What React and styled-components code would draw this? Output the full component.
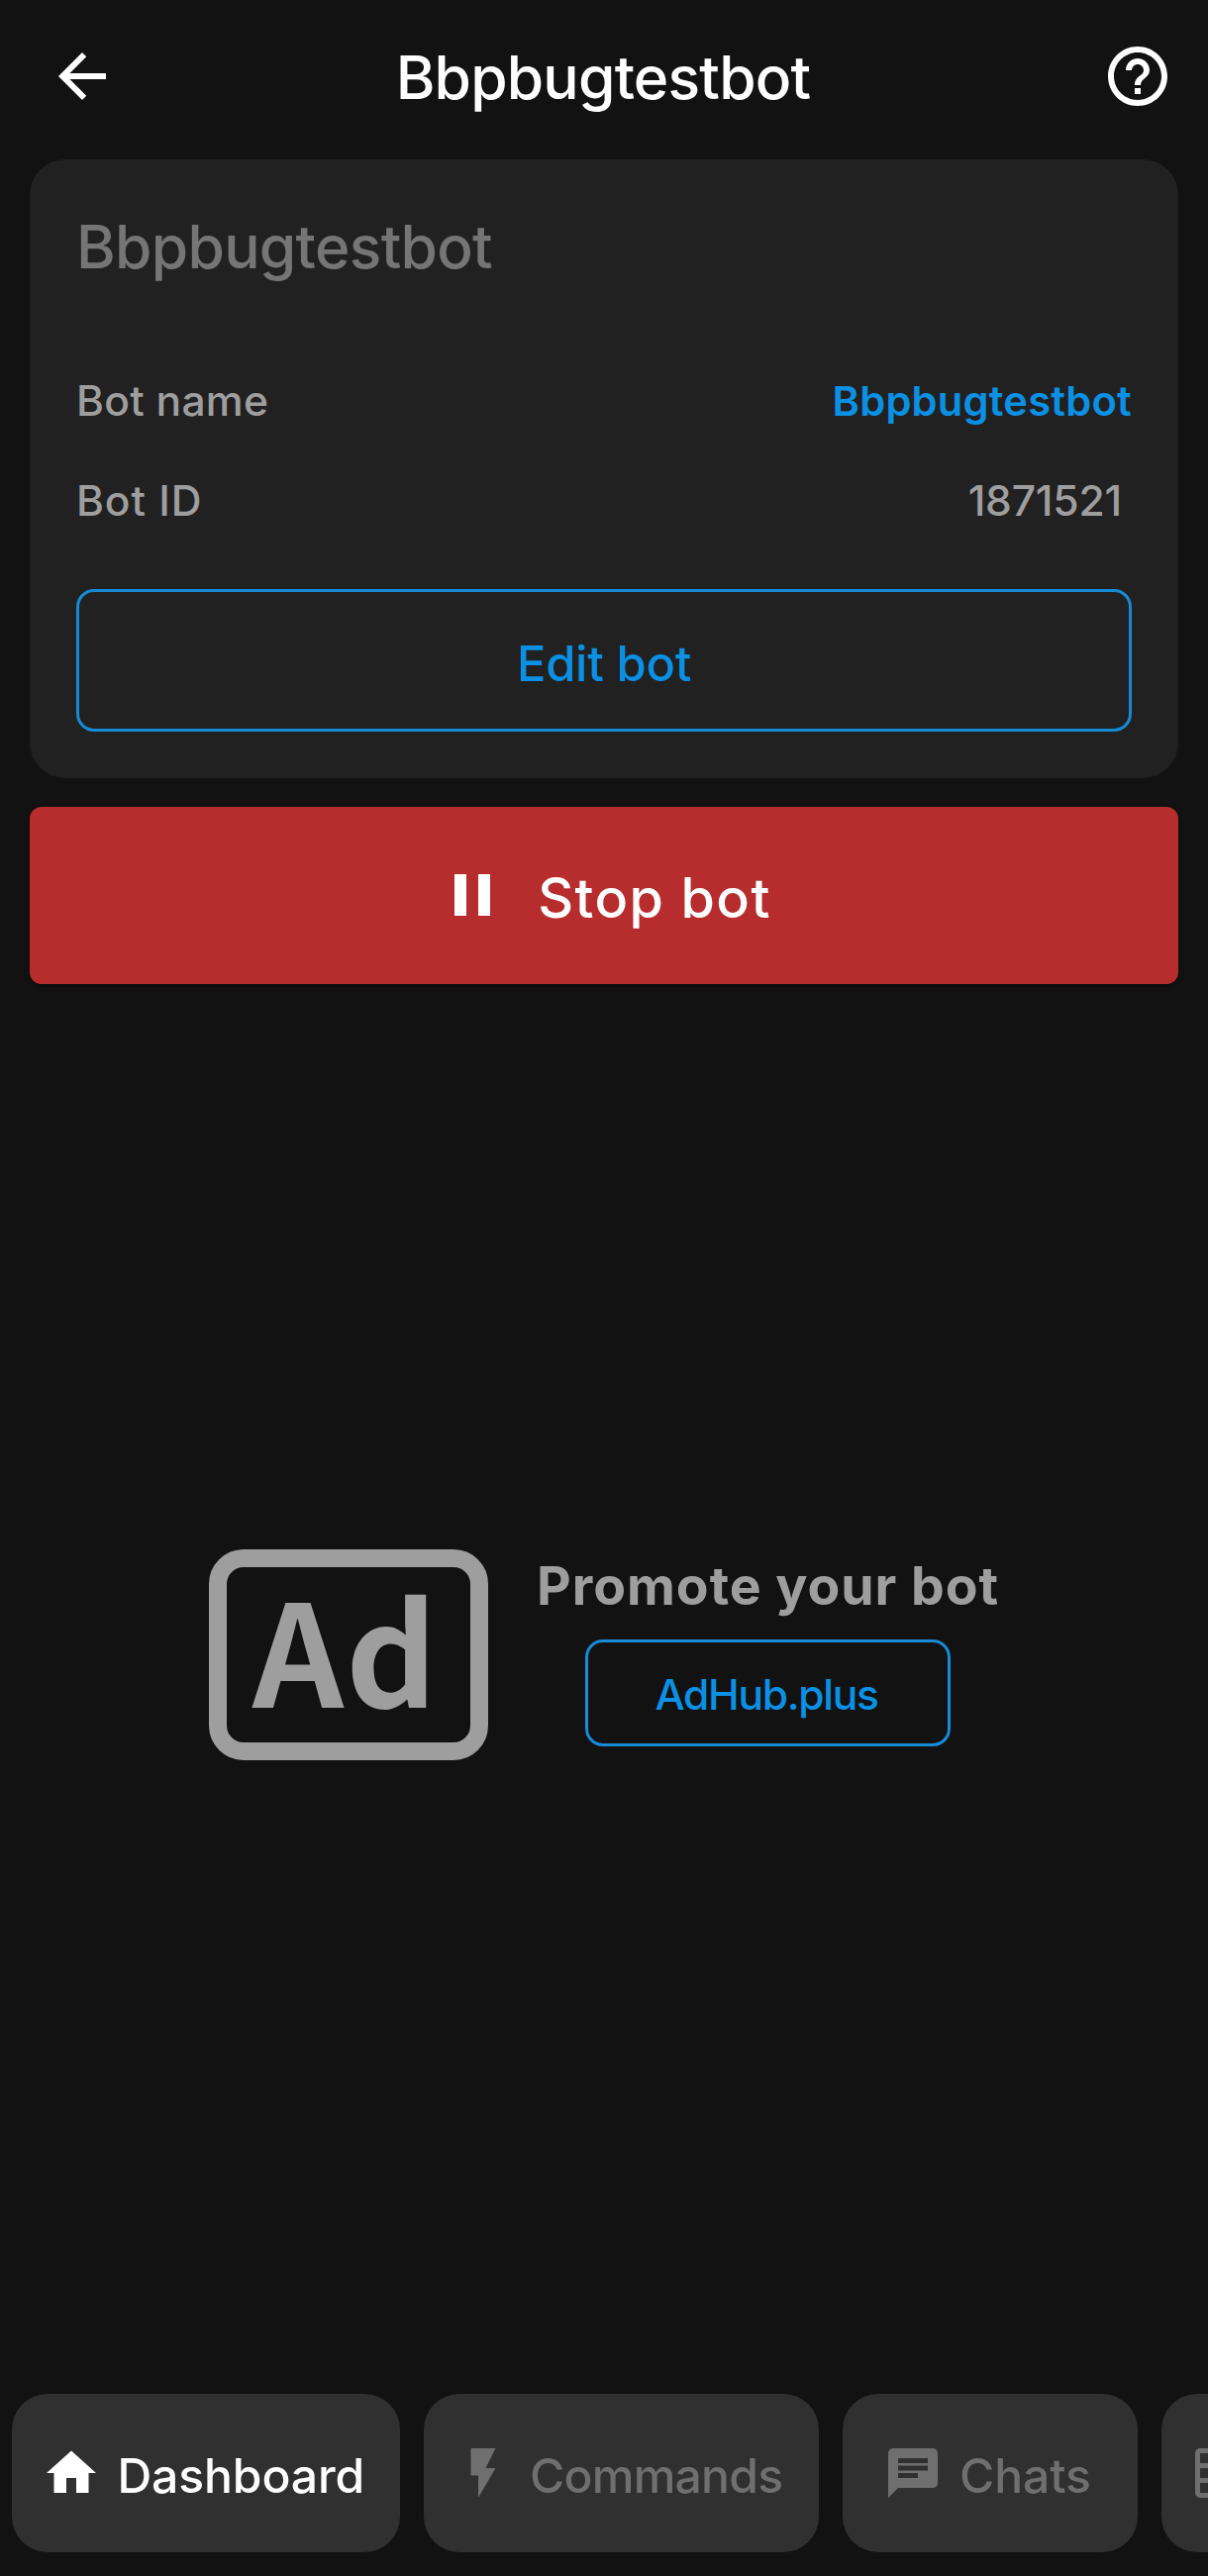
import React from "react";
import styled, { createGlobalStyle } from "styled-components";

const color = {
  page: "#121212",
  card: "#212121",
  tab: "#303030",
  accent: "#0b90e3",
  outline: "#178bd6",
  danger: "#b72c2c",
  muted: "#9e9e9e",
  dim: "#757575",
  inactive: "#6f6f6f",
};

const GlobalStyle = createGlobalStyle`
  *, *::before, *::after { box-sizing: border-box; }
  body {
    margin: 0;
    background: ${color.page};
    font-family: Inter, "Noto Sans", sans-serif;
  }
  button { font: inherit; background: none; border: 0; padding: 0; margin: 0; }
`;

const Screen = styled.div`
  width: 1220px;
  height: 2602px;
  display: flex;
  flex-direction: column;
  overflow: hidden;
  background: ${color.page};
`;

const Label = styled.span`
  display: block;
  white-space: nowrap;
  line-height: 1.2;
  color: ${(p) => p.$color};
  font-size: ${(p) => p.$size}px;
  font-weight: ${(p) => p.$weight || 500};
  letter-spacing: ${(p) => p.$track || 0}px;
`;

const Glyph = styled.svg`
  display: block;
  flex: none;
  width: ${(p) => p.$size}px;
  height: ${(p) => p.$size}px;
  fill: ${(p) => p.$color || "#fff"};
`;

const Header = styled.header`
  height: 161px;
  padding: 0 35px 7px 47px;
  display: grid;
  grid-template-columns: 72px 1fr 72px;
  align-items: center;
`;

const IconButton = styled.button`
  width: 72px;
  height: 72px;
`;

const Title = styled.h1`
  margin: 0;
  padding: 1px 14px 0 0;
  font-size: 60.5px;
  font-weight: 530;
  line-height: 74px;
  letter-spacing: -0.8px;
  text-align: center;
  color: #fff;
`;

const Card = styled.section`
  margin: 0 30px;
  height: 625px;
  padding: 47px;
  border-radius: 36px;
  background: ${color.card};
`;

const CardTitle = styled.h2`
  margin: 0 0 64px;
  font-size: 60.5px;
  font-weight: 500;
  line-height: 82px;
  letter-spacing: -0.7px;
  color: ${color.dim};
`;

const InfoRow = styled.div`
  height: 101px;
  display: flex;
  align-items: center;
  justify-content: space-between;
  padding-right: ${(p) => p.$inset || 0}px;
`;

const BotLink = styled(Label)`
  padding-top: 2px;
`;

const OutlineButton = styled.button`
  display: flex;
  align-items: center;
  justify-content: center;
  width: ${(p) => p.$width};
  height: ${(p) => p.$height}px;
  margin-top: ${(p) => p.$top}px;
  padding: ${(p) => p.$nudge}px ${(p) => p.$right || 0}px 0 0;
  border: 3px solid ${color.outline};
  border-radius: 18px;
`;

const StopButton = styled.button`
  flex: none;
  margin: 29px 30px 0;
  height: 179px;
  display: flex;
  align-items: center;
  justify-content: center;
  gap: 30px;
  padding-bottom: 1px;
  border-radius: 12px;
  background: ${color.danger};
  box-shadow: 0 2px 5px rgba(0, 0, 0, 0.35);
`;

const StopLabel = styled(Label)`
  padding-top: 6px;
`;

const Promo = styled.section`
  flex: 1;
  display: flex;
  align-items: flex-start;
  gap: 49px;
  padding: 571px 0 0 211px;
`;

const AdBadge = styled.div`
  width: 282px;
  height: 213px;
  display: flex;
  align-items: center;
  padding: 0 0 19px 26px;
  border: 18px solid ${color.muted};
  border-radius: 35px;
  font-family: "Noto Sans CJK SC", sans-serif;
  font-size: 143.5px;
  font-weight: 700;
  line-height: 145px;
  letter-spacing: 2px;
  color: ${color.muted};
`;

const PromoText = styled.div`
  display: flex;
  flex-direction: column;
  align-items: center;
  padding-top: 5px;
`;

const TabBar = styled.nav`
  flex: none;
  display: flex;
  gap: 24px;
  height: 184px;
  padding: 0 0 24px 12px;
  overflow: hidden;
`;

const Tab = styled.button`
  flex: none;
  display: flex;
  align-items: center;
  gap: ${(p) => p.$gap || 17}px;
  width: ${(p) => p.$width}px;
  height: 160px;
  padding-left: ${(p) => p.$pad}px;
  border-radius: 36px;
  background: ${color.tab};
`;

const TabLabel = styled(Label)`
  padding-top: 5px;
`;

const paths = {
  back: "M20 11H7.83l5.59-5.59L12 4l-8 8 8 8 1.41-1.41L7.83 13H20v-2z",
  help: "M11 18h2v-2h-2v2zm1-16C6.48 2 2 6.48 2 12s4.48 10 10 10 10-4.48 10-10S17.52 2 12 2zm0 18c-4.41 0-8-3.59-8-8s3.59-8 8-8 8 3.59 8 8-3.59 8-8 8zm0-14c-2.21 0-4 1.79-4 4h2c0-1.1.9-2 2-2s2 .9 2 2c0 2-3 1.75-3 5h2c0-2.25 3-2.5 3-5 0-2.21-1.79-4-4-4z",
  pause: "M6 19h4V5H6v14zm8-14v14h4V5h-4z",
  home: "M10 20v-6h4v6h5v-8h3L12 3 2 12h3v8z",
  bolt: "M7 2v11h3v9l7-12h-4l4-8z",
  chat: "M20 2H4c-1.1 0-1.99.9-1.99 2L2 22l4-4h14c1.1 0 2-.9 2-2V4c0-1.1-.9-2-2-2zM6 9h12v2H6V9zm8 5H6v-2h8v2zm4-6H6V6h12v2z",
  table: "M4 2h16a2 2 0 0 1 2 2v16a2 2 0 0 1-2 2H4a2 2 0 0 1-2-2V4a2 2 0 0 1 2-2zm0 2v4h16V4H4zm0 6v4h16v-4H4zm0 6v4h16v-4H4z",
};

const Icon = ({ name, size, fill }) => (
  <Glyph viewBox="0 0 24 24" $size={size} $color={fill} aria-hidden="true">
    <path fillRule="evenodd" d={paths[name]} />
  </Glyph>
);

const tabs = [
  { icon: "home", label: "Dashboard", width: 392, pad: 29.5, track: -0.13, active: true },
  { icon: "bolt", label: "Commands", width: 399, pad: 29.5, track: -0.8, gap: 17.5 },
  { icon: "chat", label: "Chats", width: 298, pad: 41, track: -0.1 },
  { icon: "table", label: "", width: 300, pad: 29 },
];

export default function App() {
  return (
    <>
      <GlobalStyle />
      <Screen>
        <Header>
          <IconButton aria-label="Back">
            <Icon name="back" size={72} />
          </IconButton>
          <Title>Bbpbugtestbot</Title>
          <IconButton aria-label="Help">
            <Icon name="help" size={72} />
          </IconButton>
        </Header>

        <Card>
          <CardTitle>Bbpbugtestbot</CardTitle>
          <InfoRow>
            <Label $size={42.6} $track={0.25} $color={color.muted}>Bot name</Label>
            <BotLink $size={41.7} $weight={600} $track={0.2} $color={color.accent}>Bbpbugtestbot</BotLink>
          </InfoRow>
          <InfoRow $inset={10}>
            <Label $size={42.6} $track={0.9} $color={color.muted}>Bot ID</Label>
            <Label $size={42.6} $track={-0.2} $color={color.muted}>1871521</Label>
          </InfoRow>
          <OutlineButton $width="100%" $height={144} $top={39} $nudge={9}>
            <Label $size={48.8} $track={-0.2} $color={color.accent}>Edit bot</Label>
          </OutlineButton>
        </Card>

        <StopButton>
          <Icon name="pause" size={72} />
          <StopLabel $size={55.7} $track={1.4} $color="#fff">Stop bot</StopLabel>
        </StopButton>

        <Promo>
          <AdBadge>Ad</AdBadge>
          <PromoText>
            <Label $size={53.6} $weight={700} $track={0.95} $color={color.muted}>Promote your bot</Label>
            <OutlineButton $width="369px" $height={108} $top={22} $nudge={3} $right={3}>
              <Label $size={42.6} $track={-1.35} $color={color.accent}>AdHub.plus</Label>
            </OutlineButton>
          </PromoText>
        </Promo>

        <TabBar>
          {tabs.map((t) => (
            <Tab key={t.icon} $width={t.width} $pad={t.pad} $gap={t.gap}>
              <Icon name={t.icon} size={60} fill={t.active ? "#fff" : color.inactive} />
              {t.label && (
                <TabLabel $size={48.1} $track={t.track} $color={t.active ? "#fff" : color.inactive}>
                  {t.label}
                </TabLabel>
              )}
            </Tab>
          ))}
        </TabBar>
      </Screen>
    </>
  );
}
